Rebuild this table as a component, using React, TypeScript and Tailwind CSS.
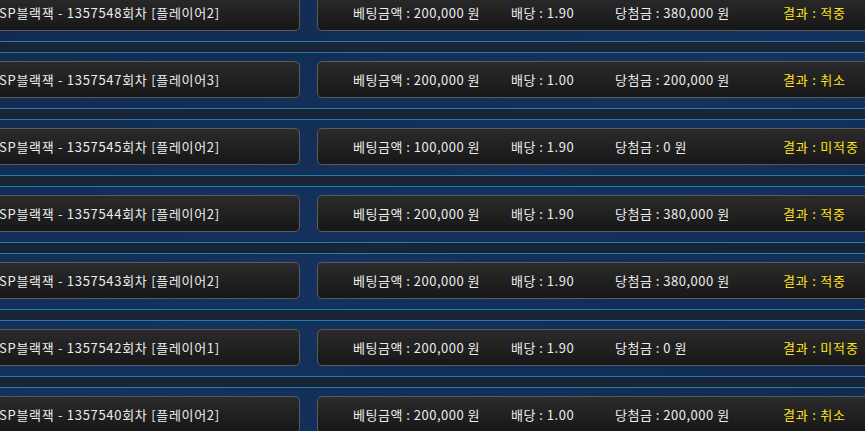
import React from 'react';

interface Bet {
  round: string;
  player: string;
  amount: string;
  odds: string;
  win: string;
  result: string;
}

const bets: Bet[] = [
  { round: '1357548', player: '플레이어2', amount: '200,000', odds: '1.90', win: '380,000', result: '적중' },
  { round: '1357547', player: '플레이어3', amount: '200,000', odds: '1.00', win: '200,000', result: '취소' },
  { round: '1357545', player: '플레이어2', amount: '100,000', odds: '1.90', win: '0', result: '미적중' },
  { round: '1357544', player: '플레이어2', amount: '200,000', odds: '1.90', win: '380,000', result: '적중' },
  { round: '1357543', player: '플레이어2', amount: '200,000', odds: '1.90', win: '380,000', result: '적중' },
  { round: '1357542', player: '플레이어1', amount: '200,000', odds: '1.90', win: '0', result: '미적중' },
  { round: '1357540', player: '플레이어2', amount: '200,000', odds: '1.00', win: '200,000', result: '취소' },
];

const box =
  'h-[37px] flex items-center border border-[#5b5b5b] rounded-[5px] bg-gradient-to-b from-[#2b2b2b] to-[#171717]';

export default function App() {
  return (
    <div
      className="w-[865px] h-[431px] overflow-hidden bg-gradient-to-br from-[#122a4f] via-[#14325d] to-[#112a52] text-[13px] tracking-[0.5px] text-[#ececec]"
      style={{ fontFamily: '"Noto Sans CJK KR", "Liberation Sans", sans-serif' }}
    >
      <div className="flex flex-col -mt-[6px]">
        {bets.map((b, i) => (
          <div key={i} className="flex flex-col">
            <div className="flex">
              {/* game / round */}
              <div className={`${box} w-[311px] -ml-[11px] pl-[9px] shrink-0 whitespace-nowrap tracking-[0.7px]`}>
                SP블랙잭 - {b.round}회차 [{b.player}]
              </div>
              {/* bet details */}
              <div className={`${box} ml-[17px] w-[600px] shrink-0 pl-[35px] whitespace-nowrap`}>
                <span className="w-[158px] shrink-0">베팅금액 : {b.amount} 원</span>
                <span className="w-[104px] shrink-0">배당 : {b.odds}</span>
                <span className="w-[168px] shrink-0">당첨금 : {b.win} 원</span>
                <span className="text-[#ffe21a] tracking-[0.8px]">결과 : {b.result}</span>
              </div>
            </div>
            {/* separator strip */}
            <div className="h-[30px] flex flex-col">
              <div className="h-[10px]" />
              <div className="h-px bg-[#1f7fa6]" />
              <div className="h-[10px] bg-[#1a2437]" />
              <div className="h-px bg-[#1f7fa6]" />
            </div>
          </div>
        ))}
      </div>
    </div>
  );
}
